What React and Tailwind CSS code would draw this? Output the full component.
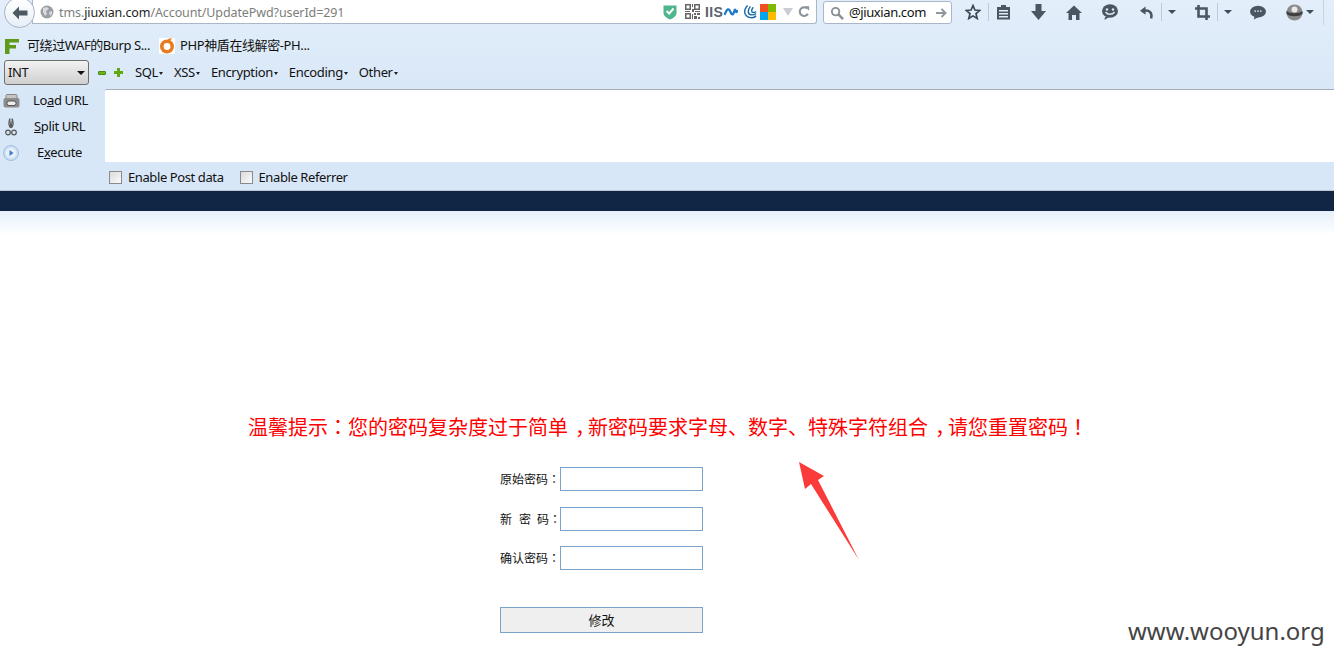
const F = '"Liberation Sans","Noto Sans CJK SC",sans-serif';
const cjk = { fontFamily: '"Noto Sans","Noto Sans CJK SC",sans-serif' };
const tc = { fontFamily: '"Noto Sans CJK TC",sans-serif' };

function Caret({ cls = "" }) {
  return <span className={`inline-block w-0 h-0 border-l-[4px] border-r-[4px] border-t-[4px] border-l-transparent border-r-transparent border-t-[#3f4c5c] ${cls}`} />;
}
function Tiny() {
  return <span className="inline-block w-0 h-0 ml-[1px] mb-[2px] border-l-[2px] border-r-[2px] border-t-[3px] border-l-transparent border-r-transparent border-t-[#222]" />;
}
function Comma() {
  return <span className="pl-[7px] tracking-[-7px]">，</span>;
}

function NavBar() {
  return (
    <div className="h-[33px] flex items-start pt-0 relative">
      <div className="relative z-10 ml-[4px] -mt-[3px] w-[31px] h-[31px] rounded-full bg-gradient-to-b from-white to-[#e8eff7] border border-[#a5b3c4] flex items-center justify-center shrink-0">
        <svg width="16" height="14" viewBox="0 0 16 14"><path d="M7 0.5 L0.5 7 L7 13.5 L7 9.5 L15.5 9.5 L15.5 4.5 L7 4.5 Z" fill="#4f5964" /></svg>
      </div>
      <div className="-ml-[3px] w-[785px] h-[24px] bg-white border border-t-0 border-[#a9b7c9] rounded-br-[3px] flex items-center pl-[7px] pr-[6px] shrink-0">
        <svg width="14" height="14" viewBox="0 0 14 14" className="shrink-0"><circle cx="7" cy="7" r="6.5" fill="#9a9ea3" /><path d="M3 3 L7 2 L9 4 L6 6 L7 9 L5 11 L3 7 Z M9 7 L12 6 L12 9 L10 11 Z" fill="#d8dadc" /></svg>
        <span className="ml-[5px] mt-[3px] text-[12.5px] tracking-[-0.1px] text-[#7d7d7d] whitespace-nowrap" style={cjk}>tms.<span className="text-[#222]">jiuxian.com</span>/Account/UpdatePwd?userId=291</span>
        <div className="ml-auto flex items-center">
          <svg width="14" height="16" viewBox="0 0 14 16" className="mr-[8px]"><path d="M0.5 1.5 H13.5 V9 C13.5 12 10 14.5 7 15.5 C4 14.5 0.5 12 0.5 9 Z" fill="#4fb58c" /><path d="M3.5 7 L6.2 9.5 L10.5 4.5" fill="none" stroke="#fff" strokeWidth="2" /></svg>
          <svg width="15" height="15" viewBox="0 0 15 15" className="mr-[5px]" fill="#666">
            <path fillRule="evenodd" d="M0 0H6V6H0ZM1.5 1.5V4.5H4.5V1.5ZM9 0H15V6H9ZM10.5 1.5V4.5H13.5V1.5ZM0 9H6V15H0ZM1.5 10.5V13.5H4.5V10.5Z" />
            <path d="M7 0H8V3H7ZM7 5H9V8H7ZM0 7H5V8H0ZM10 7H15V8H10ZM9 9H11V11H9ZM12 9H15V11H12ZM7 10H8V15H7ZM9 12H12V15H9ZM13 13H15V15H13Z" />
          </svg>
          <span className="w-[17px] text-[14px] font-bold text-[#5a6470] leading-none tracking-[0.4px] whitespace-nowrap" style={{ fontFamily: '"Liberation Sans",sans-serif' }}>IIS</span>
          <svg width="14" height="10" viewBox="0 0 14 10" className="ml-[2px]"><path d="M0.5 8 C3 1 5 1 6.5 5 C8 9 9.5 8 11 2 C12 6 12.5 6 13.5 3" fill="none" stroke="#1f78c4" strokeWidth="2.2" /></svg>
          <svg width="15" height="16" viewBox="0 0 16 16" className="ml-[4px]" fill="none" stroke="#1769aa" strokeWidth="1.5"><path d="M6 1 C1 6 2 13 9 14 C12 14.5 14 13.5 15 12" /><path d="M9 2 C5.5 6 6 10.5 10 11 C12 11.2 14 10.5 15 9.5" /><path d="M12 3 C9.5 6 10 8.5 12 8.6 C13 8.7 14 8.2 15 7.5" /></svg>
          <div className="ml-[3px] grid grid-cols-2 w-[16px] h-[16px]">
            <span className="bg-[#f25022]" /><span className="bg-[#7fba00]" /><span className="bg-[#00a4ef]" /><span className="bg-[#ffb900]" />
          </div>
          <span className="ml-[7px] w-0 h-0 border-l-[5px] border-r-[5px] border-t-[8px] border-l-transparent border-r-transparent border-t-[#c9ced4]" />
          <svg width="12" height="13" viewBox="0 0 14 14" className="ml-[5px]" fill="none"><path d="M11.5 9.5 A5 5 0 1 1 10.5 3.5" stroke="#8a929b" strokeWidth="2.4" /><path d="M8 1 H13 V6 Z" fill="#8a929b" /></svg>
        </div>
      </div>
      <div className="ml-[6px] mt-[1px] w-[129px] h-[23px] bg-white border border-[#a9b7c9] rounded-[3px] flex items-center pl-[6px] pr-[4px] shrink-0">
        <svg width="14" height="14" viewBox="0 0 15 15" fill="none" stroke="#8a8f96" strokeWidth="2"><circle cx="6" cy="6" r="4" /><path d="M9 9 L14 14" strokeWidth="2.6" /></svg>
        <span className="ml-[5px] text-[13px] tracking-[-0.4px] text-[#111] whitespace-nowrap" style={cjk}>@jiuxian.com</span>
        <svg width="11" height="10" viewBox="0 0 11 10" className="ml-auto" fill="none" stroke="#8f979f" strokeWidth="2"><path d="M0 5 H9 M5.5 1 L9.5 5 L5.5 9" /></svg>
      </div>
      <div className="flex items-center h-[24px] ml-[13px] text-[#4c5661]">
        <svg width="16" height="16" viewBox="0 0 16 16" fill="none" stroke="#3e4853" strokeWidth="1.7"><path d="M8 1.5 L9.9 6 L14.8 6.4 L11 9.6 L12.2 14.5 L8 11.9 L3.8 14.5 L5 9.6 L1.2 6.4 L6.1 6 Z" /></svg>
        <span className="ml-[7px] w-px h-[18px] bg-[#bccadb]" />
        <svg width="15" height="16" viewBox="0 0 15 16" className="ml-[7px]" fill="#4c5661"><path fillRule="evenodd" d="M1 3 H5 V1 H10 V3 H14 V15.5 H1 Z M3 6 V7.5 H12 V6 Z M3 9 V10.5 H12 V9 Z M3 12 V13.5 H12 V12 Z" /></svg>
        <svg width="15" height="16" viewBox="0 0 15 16" className="ml-[20px]" fill="#4c5661"><path d="M4.5 0 H10.5 V7 H15 L7.5 16 L0 7 H4.5 Z" /></svg>
        <svg width="16" height="15" viewBox="0 0 16 15" className="ml-[20px]" fill="#4c5661"><path d="M8 0.5 L16 8 H13.5 V15 H10 V10 H6 V15 H2.5 V8 H0 Z" /></svg>
        <svg width="16" height="16" viewBox="0 0 16 16" className="ml-[20px]"><ellipse cx="8" cy="7" rx="8" ry="6.8" fill="#4c5661" /><path d="M3 13 L2.5 16 L7 13 Z" fill="#4c5661" /><circle cx="5" cy="5.5" r="1.2" fill="#d8e7f7" /><circle cx="11" cy="5.5" r="1.2" fill="#d8e7f7" /><path d="M3.5 8 C5.5 11 10.5 11 12.5 8" fill="none" stroke="#d8e7f7" strokeWidth="1.4" /></svg>
        <svg width="15" height="15" viewBox="0 0 16 15" className="ml-[21px]" fill="none"><path d="M7 1 L1 5.5 L7 10 Z" fill="#4c5661" /><path d="M6 5.5 C11 5 14.5 7.5 13 14" stroke="#4c5661" strokeWidth="2.6" /></svg>
        <span className="ml-[7px] w-px h-[18px] bg-[#bccadb]" />
        <Caret cls="ml-[6px]" />
        <svg width="15" height="15" viewBox="0 0 15 15" className="ml-[19px]" fill="none" stroke="#4c5661" strokeWidth="2.6"><path d="M0 3.5 H11.5 V15 M3.5 0 V11.5 H15" /></svg>
        <span className="ml-[7px] w-px h-[18px] bg-[#bccadb]" />
        <Caret cls="ml-[6px]" />
        <svg width="16" height="15" viewBox="0 0 17 15" className="ml-[18px]" fill="#4c5661"><ellipse cx="8.5" cy="6.5" rx="8.5" ry="6.2" /><path d="M5 11 L4 15 L10 12 Z" /><circle cx="5.5" cy="6" r="0.9" fill="#d8e7f7" /><circle cx="8.5" cy="6" r="0.9" fill="#d8e7f7" /><circle cx="11.5" cy="6" r="0.9" fill="#d8e7f7" /></svg>
        <svg width="17" height="17" viewBox="0 0 17 17" className="ml-[20px]"><circle cx="8.5" cy="8.5" r="8" fill="#8a8a8a" /><path d="M0.5 7 C4 10 13 10 16.5 7 L16.5 10 C13 13 4 13 0.5 10 Z" fill="#3f3f3f" /><circle cx="8.5" cy="5.5" r="3" fill="#e8e8e8" /></svg>
        <Caret cls="ml-[3px]" />
        <span className="ml-[9px] w-px h-[26px] bg-[#c6d4e4]" />
      </div>
    </div>
  );
}

function Bookmarks() {
  return (
    <div className="h-[26px] flex items-center pl-[5px] text-[13px] tracking-[-0.4px] text-[#111]" style={cjk}>
      <svg width="14" height="15" viewBox="0 0 14 15" className="shrink-0"><path d="M0 0 H14 V3.5 H4.5 V6 H11 V9.5 H4.5 V15 H0 Z" fill="#5f9a1b" /></svg>
      <span className="ml-[8px] whitespace-nowrap">可绕过WAF的Burp S...</span>
      <svg width="16" height="16" viewBox="0 0 16 16" className="ml-[9px] shrink-0"><rect width="16" height="16" fill="#fff" /><circle cx="8" cy="8.5" r="7" fill="#e77c22" /><circle cx="8" cy="8.5" r="3.4" fill="#fff" /><path d="M9 1 L13 0 L10 5 Z" fill="#e77c22" /></svg>
      <span className="ml-[5px] whitespace-nowrap">PHP神盾在线解密-PH...</span>
    </div>
  );
}

function Menu({ label }) {
  return <span className="whitespace-nowrap">{label}<Tiny /></span>;
}

function HackbarTop() {
  return (
    <div className="h-[30px] pb-[3px] flex items-center pl-[4px] text-[13px] tracking-[-0.35px] text-[#111]" style={cjk}>
      <div className="w-[85px] h-[25px] rounded-[3px] border border-[#6f6f6f] bg-gradient-to-b from-[#f2f2f2] to-[#cfcfcf] flex items-center pl-[3px] pr-[2px] shrink-0">
        <span>INT</span>
        <span className="ml-auto mr-[1px] w-0 h-0 border-l-[4px] border-r-[4px] border-t-[4px] border-l-transparent border-r-transparent border-t-[#111]" />
      </div>
      <span className="ml-[9px] w-[8px] h-[4px] bg-[#6cb51a] border border-[#4b8a10] rounded-[1px] shrink-0" />
      <svg width="9" height="9" viewBox="0 0 9 9" className="ml-[8px] shrink-0"><path d="M3 0 H6 V3 H9 V6 H6 V9 H3 V6 H0 V3 H3 Z" fill="#62a814" /></svg>
      <div className="ml-[12px] flex items-center gap-[11px]">
        <Menu label="SQL" /><Menu label="XSS" /><Menu label="Encryption" /><Menu label="Encoding" /><Menu label="Other" />
      </div>
    </div>
  );
}

function Side({ icon, pad, children }) {
  return (
    <div className="h-[26px] flex items-center relative">
      <span className="w-[20px] flex justify-center shrink-0 ml-[1px]">{icon}</span>
      <span className="whitespace-nowrap" style={{ marginLeft: pad }}>{children}</span>
    </div>
  );
}

function Hackbar() {
  return (
    <div className="flex h-[73px]">
      <div className="w-[105px] shrink-0 text-[13px] tracking-[-0.35px] text-[#111] -mt-[1px]" style={cjk}>
        <Side pad={12} icon={<svg width="17" height="14" viewBox="0 0 17 14"><rect x="3" y="0.5" width="11" height="5" rx="1" fill="#c4c4c4" stroke="#888" /><rect x="0.5" y="4" width="16" height="9.5" rx="2" fill="#8c8c8c" /><rect x="4" y="7" width="9" height="4.5" rx="2" fill="#eee" stroke="#555" /></svg>}>Lo<span className="underline">a</span>d URL</Side>
        <Side pad={13} icon={<svg width="12" height="18" viewBox="0 0 12 18" fill="none" stroke="#555" strokeWidth="1.2"><path d="M4.5 1 L6 10 M7.5 1 L6 10" /><path d="M5 0.5 C3.5 4 4 8 5.5 10 M7 0.5 C8.5 4 8 8 6.5 10" /><circle cx="3" cy="14.5" r="2.3" /><circle cx="9" cy="14.5" r="2.3" /></svg>}><span className="underline">S</span>plit URL</Side>
        <Side pad={16} icon={<svg width="16" height="16" viewBox="0 0 16 16"><circle cx="8" cy="8" r="7.5" fill="#cfe0f5" stroke="#9fbde0" /><circle cx="8" cy="8" r="5" fill="#e8f1fb" /><path d="M6.5 5 L10.5 8 L6.5 11 Z" fill="#3f7cc4" /></svg>}>E<span className="underline">x</span>ecute</Side>
      </div>
      <div className="flex-1 bg-white border-t border-[#a9adb3] rounded-tl-[2px]" />
    </div>
  );
}

function Check({ label, ml }) {
  return (
    <div className="flex items-center" style={{ marginLeft: ml }}>
      <span className="w-[13px] h-[13px] border border-[#8b8b8b] bg-gradient-to-br from-[#dcdcdc] to-[#fafafa] shrink-0" />
      <span className="ml-[6px] whitespace-nowrap">{label}</span>
    </div>
  );
}

function Colon() {
  return <span className="inline-block w-[12px] text-center" style={tc}>：</span>;
}

function Field({ children, mt }) {
  return (
    <div className="flex items-center h-[24px]" style={{ marginTop: mt }}>
      <span className="w-[60px] text-[12px] text-[#111] whitespace-nowrap shrink-0">{children}<Colon /></span>
      <div className="w-[143px] h-[24px] bg-white border border-[#7ba3c9]" />
    </div>
  );
}

export default function App() {
  return (
    <div className="relative w-[1334px] h-[661px] overflow-hidden bg-white flex flex-col" style={{ fontFamily: F }}>
      <div className="h-[191px] shrink-0 bg-gradient-to-b from-[#e3eefa] via-[#d8e7f7] to-[#d8e7f7] border-b border-[#b9c6d4] flex flex-col">
        <NavBar />
        <Bookmarks />
        <HackbarTop />
        <Hackbar />
        <div className="h-[28px] pt-[3px] flex items-center text-[13px] tracking-[-0.4px] text-[#111]" style={cjk}>
          <Check label="Enable Post data" ml={109} />
          <Check label="Enable Referrer" ml={16} />
        </div>
      </div>
      <div className="h-[20px] shrink-0 bg-[#112544]" />
      <div className="h-[24px] shrink-0 bg-gradient-to-b from-[#e6f1fb] to-white" />
      <div className="flex-1 flex flex-col items-center">
        <div className="mt-[176px] ml-[2px] h-[32px] flex items-center text-[20px] text-[#ff0000] whitespace-nowrap leading-none" style={{ fontFamily: '"Noto Sans CJK SC",sans-serif' }}>
          <span>温馨提示<span style={tc}>：</span>您的密码复杂度过于简单<Comma />新密码要求字母、数字、特殊字符组合<Comma />请您重置密码<span style={tc}>！</span></span>
        </div>
        <div className="mt-[24px] mr-[131px] flex flex-col" style={{ fontFamily: '"Noto Sans CJK SC",sans-serif' }}>
          <Field>原始密码</Field>
          <Field mt={16}>新<span className="ml-[7px]">密</span><span className="ml-[6px]">码</span></Field>
          <Field mt={15}>确认密码</Field>
          <div className="mt-[37px] w-[203px] h-[26px] bg-[#efefef] border border-[#7ba3c9] flex items-center justify-center text-[13px] text-[#111]">修改</div>
        </div>
      </div>
      <svg className="absolute left-[795px] top-[458px]" width="70" height="106" viewBox="0 0 70 106">
        <path d="M4 4 L29 18 L23 22 L64 102 L16 26 L10 31 Z" fill="#fb3a3a" />
      </svg>
      <div className="absolute left-[1128px] top-[615px] text-[24px] leading-[32px] text-[#444]" style={{ fontFamily: '"Noto Sans",sans-serif' }}>www.wooyun.org</div>
    </div>
  );
}
